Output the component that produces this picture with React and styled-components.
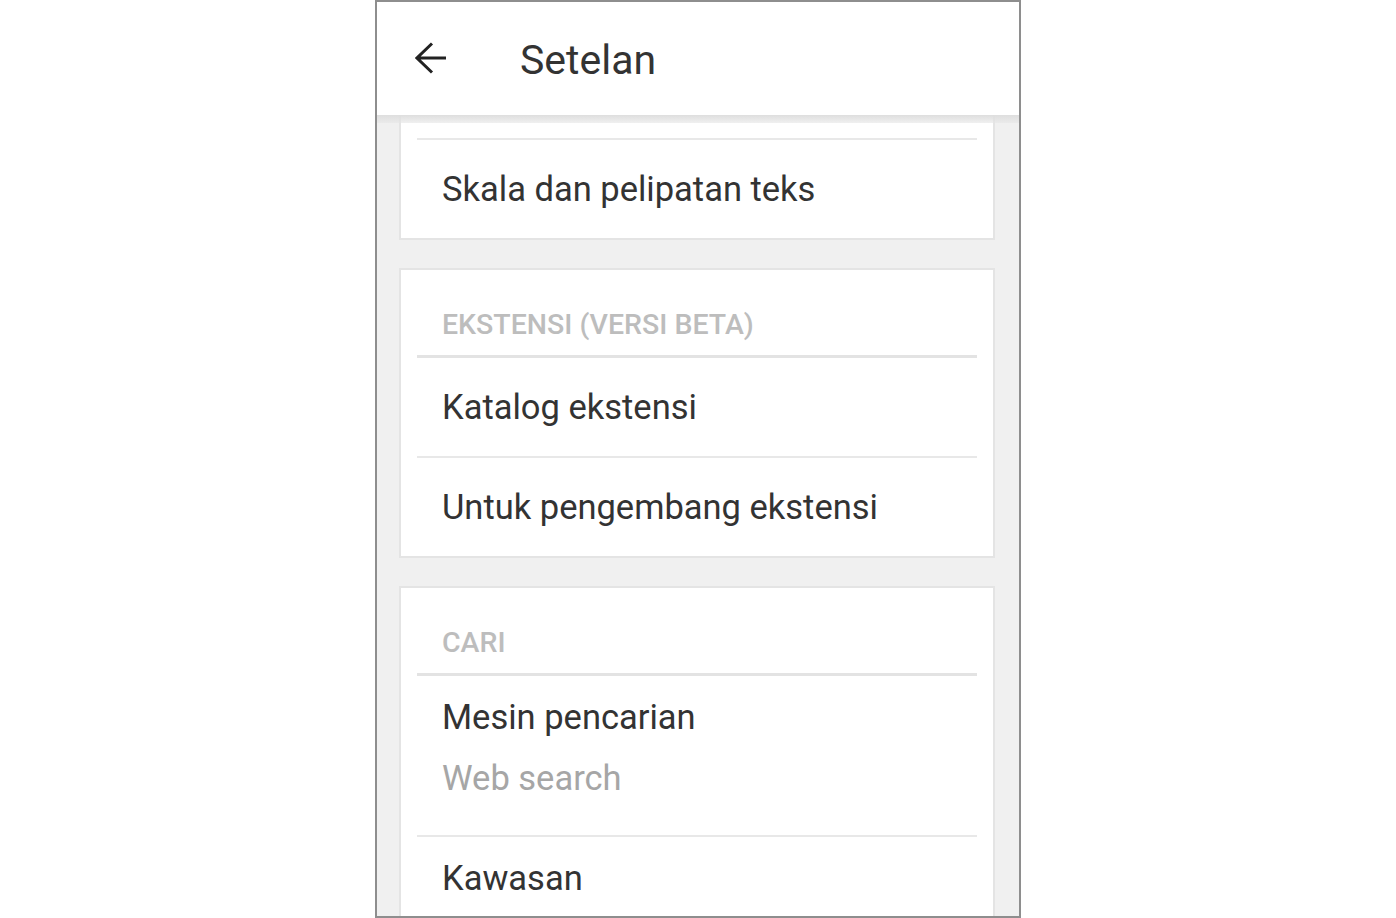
import React from "react";
import styled, { createGlobalStyle } from "styled-components";

const GlobalStyle = createGlobalStyle`
  body {
    margin: 0;
    background: #ffffff;
    font-family: Roboto, "Noto Sans", sans-serif;
  }
`;

const App = () => {
  return (
    <>
      <GlobalStyle />
      <Page>
        <Phone>
          <TopBar>
            <BackButton aria-label="Kembali">
              <svg width="32" height="32" viewBox="0 0 32 32" fill="none">
                <path
                  d="M2 16H31M17 1.5L2 16L17 30.5"
                  stroke="#222"
                  strokeWidth="3"
                  strokeLinejoin="miter"
                />
              </svg>
            </BackButton>
            <Title>Setelan</Title>
          </TopBar>

          <Content>
            <Card $cut>
              <Item $divider>Skala dan pelipatan teks</Item>
            </Card>

            <Card>
              <SectionTitle>EKSTENSI (VERSI BETA)</SectionTitle>
              <Item>Katalog ekstensi</Item>
              <Item $divider>Untuk pengembang ekstensi</Item>
            </Card>

            <Card>
              <SectionTitle>CARI</SectionTitle>
              <Item $tall>
                Mesin pencarian
                <Summary>Web search</Summary>
              </Item>
              <Item $divider $tall>
                Kawasan
              </Item>
            </Card>
          </Content>
        </Phone>
      </Page>
    </>
  );
};

const Page = styled.div`
  display: flex;
  justify-content: center;
  height: 918px;
`;

const Phone = styled.div`
  position: relative;
  display: flex;
  flex-direction: column;
  width: 646px;
  height: 918px;
  box-sizing: border-box;
  border: 2px solid #8e8e8e;
  overflow: hidden;
  background: #f0f0f0;
`;

const TopBar = styled.div`
  position: relative;
  z-index: 1;
  flex-shrink: 0;
  display: flex;
  align-items: center;
  height: 113px;
  padding-left: 38px;
  background: #ffffff;

  &::after {
    content: "";
    position: absolute;
    left: 0;
    right: 0;
    top: 100%;
    height: 8px;
    background: linear-gradient(#dedede, rgba(230, 230, 230, 0.6));
  }
`;

const BackButton = styled.div`
  display: flex;
  width: 32px;
  height: 32px;
  margin-top: -2px;
`;

const Title = styled.div`
  margin-left: 73px;
  margin-top: 2px;
  font-size: 41px;
  color: #333333;
`;

const Content = styled.div`
  flex: 1;
  display: flex;
  flex-direction: column;
  gap: 28px;
  padding: 0 24px 0 22px;
`;

const Card = styled.div`
  flex-shrink: 0;
  padding: ${(p) => (p.$cut ? "23px 16px 0" : "0 16px")};
  background: #ffffff;
  border: 2px solid #e4e4e4;
  border-top: ${(p) => (p.$cut ? "none" : "2px solid #e4e4e4")};
`;

const SectionTitle = styled.div`
  padding: 41px 0 16px 25px;
  font-size: 28.5px;
  line-height: 28px;
  font-weight: 500;
  color: #bdbdbd;
  border-bottom: 3px solid #e3e3e3;
`;

const Item = styled.div`
  padding: ${(p) => (p.$tall ? "23px 25px 39px" : "31px 25px")};
  font-size: 34.5px;
  line-height: 36px;
  color: #333333;
  border-top: ${(p) => (p.$divider ? "2px solid #e8e8e8" : "none")};
`;

const Summary = styled.div`
  margin-top: 25px;
  color: #a6a6a6;
`;

export default App;
